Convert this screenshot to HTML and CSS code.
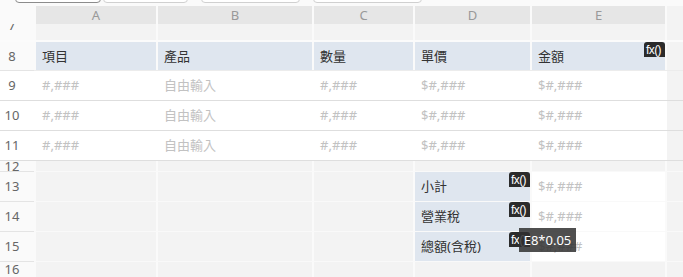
FILE: index.html
```html
<!DOCTYPE html>
<html lang="zh-Hant">
<head>
  <meta charset="UTF-8">
  <title>報價單</title>
  <link rel="stylesheet" href="styles.css">
</head>
<body>

<div class="toolbar">
  <button class="tool active"></button>
  <button class="tool"></button>
  <button class="tool wide gap"></button>
  <button class="tool wider gap"></button>
</div>

<div class="sheet">
  <div class="row head-row">
    <div class="rh"></div>
    <div class="ch">A</div>
    <div class="ch">B</div>
    <div class="ch">C</div>
    <div class="ch">D</div>
    <div class="ch">E</div>
    <div class="cf"></div>
  </div>

  <div class="row cut">
    <div class="rh">7</div>
    <div class="blank"></div>
    <div class="blank"></div>
    <div class="blank"></div>
    <div class="blank"></div>
    <div class="blank"></div>
    <div class="cf"></div>
  </div>

  <div class="row label-row">
    <div class="rh">8</div>
    <div class="cell label">項目</div>
    <div class="cell label">產品</div>
    <div class="cell label">數量</div>
    <div class="cell label">單價</div>
    <div class="cell label has-fx">金額<span class="fx">fx()</span></div>
    <div class="cf"></div>
  </div>

  <div class="row data">
    <div class="rh">9</div>
    <div class="cell hint">#,###</div>
    <div class="cell hint">自由輸入</div>
    <div class="cell hint">#,###</div>
    <div class="cell hint">$#,###</div>
    <div class="cell hint">$#,###</div>
    <div class="cf"></div>
  </div>

  <div class="row data">
    <div class="rh">10</div>
    <div class="cell hint">#,###</div>
    <div class="cell hint">自由輸入</div>
    <div class="cell hint">#,###</div>
    <div class="cell hint">$#,###</div>
    <div class="cell hint">$#,###</div>
    <div class="cf"></div>
  </div>

  <div class="row data">
    <div class="rh">11</div>
    <div class="cell hint">#,###</div>
    <div class="cell hint">自由輸入</div>
    <div class="cell hint">#,###</div>
    <div class="cell hint">$#,###</div>
    <div class="cell hint">$#,###</div>
    <div class="cf"></div>
  </div>

  <div class="row thin">
    <div class="rh">12</div>
    <div class="blank"></div>
    <div class="blank"></div>
    <div class="blank"></div>
    <div class="blank"></div>
    <div class="blank"></div>
    <div class="cf"></div>
  </div>

  <div class="row">
    <div class="rh">13</div>
    <div class="blank"></div>
    <div class="blank"></div>
    <div class="blank"></div>
    <div class="cell label has-fx">小計<span class="fx">fx()</span></div>
    <div class="cell hint white">$#,###</div>
    <div class="cf"></div>
  </div>

  <div class="row">
    <div class="rh">14</div>
    <div class="blank"></div>
    <div class="blank"></div>
    <div class="blank"></div>
    <div class="cell label has-fx">營業稅<span class="fx">fx()</span></div>
    <div class="cell hint white">$#,###</div>
    <div class="cf"></div>
  </div>

  <div class="row">
    <div class="rh">15</div>
    <div class="blank"></div>
    <div class="blank"></div>
    <div class="blank"></div>
    <div class="cell label has-fx tip-host">總額(含稅)<span class="fx">fx()</span><span class="tip">E8*0.05</span></div>
    <div class="cell hint white">$#,###</div>
    <div class="cf"></div>
  </div>

  <div class="row last">
    <div class="rh">16</div>
    <div class="blank"></div>
    <div class="blank"></div>
    <div class="blank"></div>
    <div class="blank"></div>
    <div class="blank"></div>
    <div class="cf"></div>
  </div>
</div>

</body>
</html>
```

FILE: styles.css
```css
* {
  margin: 0;
  padding: 0;
  box-sizing: border-box;
}

body {
  font-family: 'Noto Sans', 'Noto Sans CJK TC', sans-serif;
  font-size: 13px;
  color: #333;
  background: #fafafa;
  overflow: hidden;
}

/* Toolbar (only the bottom edge shows) */
.toolbar {
  display: flex;
  align-items: flex-end;
  height: 3px;
  overflow: hidden;
  padding-left: 15px;
  gap: 2px;
  margin-bottom: 3px;
}

.tool {
  flex: none;
  width: 85px;
  height: 20px;
  background: #fff;
  border: 1px solid #d0d0d0;
  border-radius: 4px;
}

.tool.active {
  width: 86px;
  border-color: #8c8c8c;
}

.tool.wide {
  width: 99px;
}

.tool.wider {
  width: 109px;
}

.tool.gap {
  margin-left: 11px;
}

/* Sheet grid */
.row {
  display: grid;
  grid-template-columns: 34px 120px 154px 99px 115px 133px 1fr;
  grid-template-rows: 29px;
  column-gap: 2px;
  border-bottom: 1px solid #f9f9f9;
  background: #fafafa;
}

.rh {
  padding-right: 10px;
  text-align: center;
  color: #666;
  line-height: 29px;
  background: #fafafa;
  box-shadow: 0 1px 0 #e4e4e4;
}

.head-row {
  grid-template-rows: 18px;
  border-bottom: none;
}

.head-row .rh {
  box-shadow: none;
}

.ch {
  background: #e6e6e6;
  color: #999;
  text-align: center;
  line-height: 18px;
}

.cf {
  background: #f3f3f3;
}

.blank {
  background: #f3f3f3;
}

/* Row 7 sits under the column headers */
.row.cut {
  grid-template-rows: 16px;
  overflow: hidden;
  align-items: end;
  border-bottom: 2px solid #fbfbfb;
}

.row.cut > div {
  height: 29px;
}

.row.thin {
  grid-template-rows: 10px;
}

.row.thin .rh {
  line-height: 10px;
}

.row.last {
  grid-template-rows: 15px;
  border-bottom: none;
}

.row.last .rh {
  line-height: 15px;
}

.label-row {
  grid-template-rows: 28px;
  border-bottom-color: #ececec;
}

.label-row .rh {
  line-height: 28px;
}

.data {
  background: #fff;
  border-bottom-color: #dedede;
}

.data .rh {
  background: #fff;
  box-shadow: none;
}

.cell {
  padding-left: 6px;
  line-height: 29px;
  white-space: nowrap;
}

.label-row .cell {
  line-height: 28px;
}

.label {
  background: #dfe6ef;
  color: #333;
}

.hint {
  color: #c2c2c2;
}

.white {
  background: #fff;
}

/* Formula badge */
.has-fx {
  position: relative;
}

.fx {
  position: absolute;
  top: 0;
  right: 0;
  width: 21px;
  height: 15px;
  padding-left: 2px;
  background: #2b2b2b;
  border-radius: 3px 3px 0 0;
  color: #fff;
  font-family: 'Liberation Sans', sans-serif;
  font-size: 12px;
  letter-spacing: -0.6px;
  line-height: 17px;
  overflow: hidden;
}

.tip-host {
  z-index: 2;
}

.tip {
  position: absolute;
  left: 104px;
  top: -4px;
  width: 57px;
  height: 24px;
  background: rgba(48, 48, 48, 0.85);
  color: #fff;
  font-size: 13px;
  line-height: 24px;
  text-align: center;
}
```
